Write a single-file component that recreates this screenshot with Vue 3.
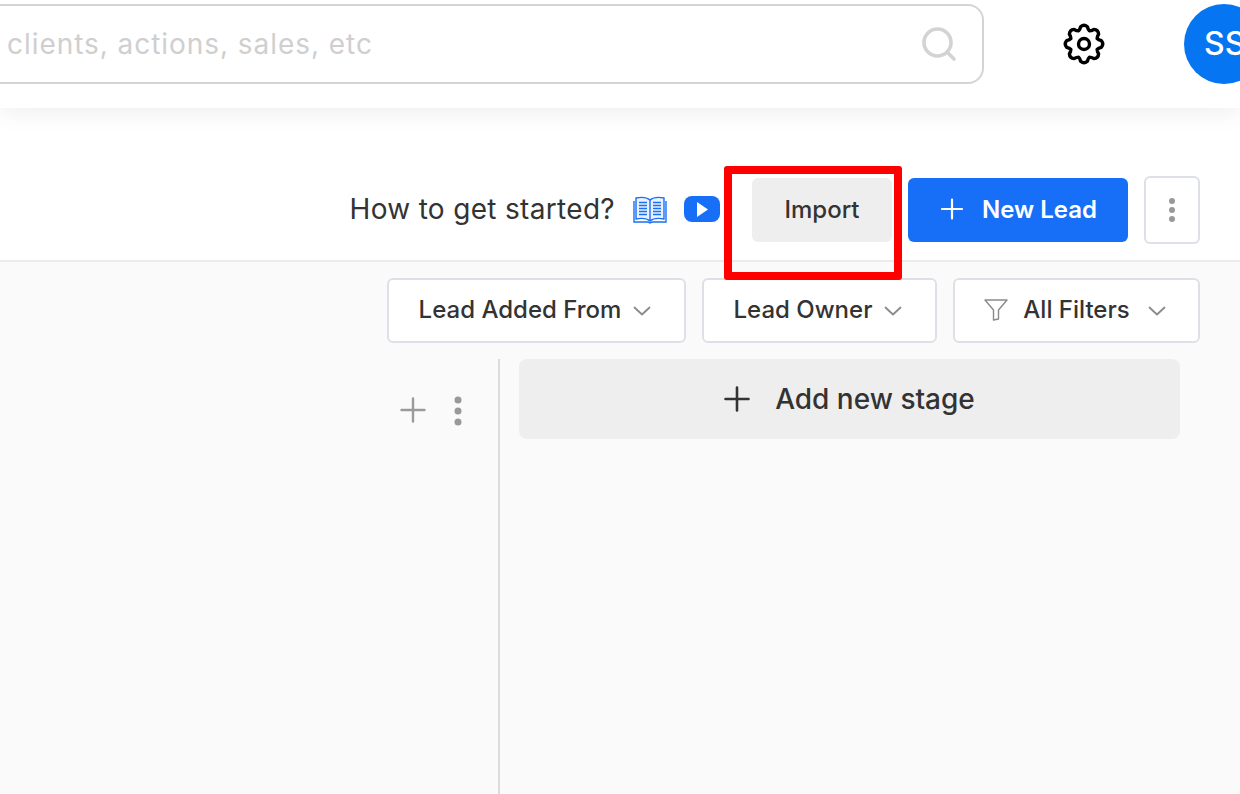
<script setup>
const filters = [
  { label: 'Lead Added From', cls: 'f1' },
  { label: 'Lead Owner', cls: 'f2' },
  { label: 'All Filters', cls: 'f3', funnel: true }
]

const polar = (deg, r) => {
  const a = ((deg - 90) * Math.PI) / 180
  return `${(22 + r * Math.cos(a)).toFixed(2)} ${(22 + r * Math.sin(a)).toFixed(2)}`
}
let gearPath = `M${polar(-22.5, 14.2)}`
for (let i = 0; i < 8; i++) {
  const a = i * 45
  gearPath += `Q${polar(a - 16, 15)} ${polar(a - 11, 17.6)}`
  gearPath += `Q${polar(a, 20.2)} ${polar(a + 11, 17.6)}`
  gearPath += `Q${polar(a + 16, 15)} ${polar(a + 22.5, 14.2)}`
}
gearPath += 'Z'
</script>

<template>
  <div class="page">
    <header class="topbar">
      <div class="search">
        <span class="placeholder">clients, actions, sales, etc</span>
        <svg class="search-icon" width="36" height="36" viewBox="0 0 36 36" fill="none" stroke="#d3d3d3" stroke-width="3.6" stroke-linecap="round">
          <circle cx="16.500" cy="16.500" r="13.500" />
          <path d="M27 27l6 6" />
        </svg>
      </div>
      <svg class="gear" width="44" height="44" viewBox="0 0 44 44" fill="none" stroke="#000" stroke-width="3.400" stroke-linejoin="round">
        <path :d="gearPath" />
        <circle cx="22" cy="22" r="5.500" />
      </svg>
      <div class="avatar">SS</div>
    </header>

    <section class="actions">
      <span class="started">How to get started?</span>
      <svg class="book" width="36" height="28" viewBox="0 0 36 28" fill="none" stroke="#1a6ff5" stroke-width="1.400">
        <path d="M18 4C15 1.500 9 1 4 2v21c5-1 11-.5 14 2 3-2.500 9-3 14-2V2c-5-1-11-.5-14 2z" fill="#e8f1fe" />
        <path d="M2 5v21h14l2 1 2-1h14V5" />
        <path d="M18 4v21" />
        <path d="M7 6.500h8M7 9.500h8M7 12.500h8M7 15.500h8M7 18.500h8M21 6.500h8M21 9.500h8M21 12.500h8M21 15.500h8M21 18.500h8" />
      </svg>
      <span class="play">
        <svg width="11" height="15" viewBox="0 0 11 15"><path d="M0 0l11 7.500L0 15z" fill="#fff" /></svg>
      </span>
      <button class="btn import">Import</button>
      <button class="btn new-lead">
        <svg width="22" height="22" viewBox="0 0 22 22" stroke="#fff" stroke-width="2.200" stroke-linecap="round"><path d="M11 1.500v19M1 11h20" /></svg>
        New Lead
      </button>
      <button class="more">
        <svg width="8" height="26" viewBox="0 0 8 26" fill="#999"><circle cx="4" cy="4" r="3" /><circle cx="4" cy="13" r="3" /><circle cx="4" cy="22" r="3" /></svg>
      </button>
      <div class="highlight"></div>
    </section>

    <main class="board">
      <div class="filters">
        <button v-for="f in filters" :key="f.label" class="filter" :class="f.cls">
          <svg v-if="f.funnel" class="funnel" width="24" height="22" viewBox="0 0 24 22" fill="none" stroke="#8a8a8a" stroke-width="1.400" stroke-linejoin="round">
            <path d="M1 1h22l-8.500 10v9l-5 1V11z" />
          </svg>
          <span>{{ f.label }}</span>
          <svg class="chev" width="18" height="10" viewBox="0 0 18 10" fill="none" stroke="#8a8a8a" stroke-width="1.800" stroke-linecap="round" stroke-linejoin="round">
            <path d="M1.500 1.500L9 8.500l7.500-7" />
          </svg>
        </button>
      </div>
      <div class="lanes">
        <div class="lane-tools">
          <svg class="tool-plus" width="26" height="26" viewBox="0 0 26 26" stroke="#9a9a9a" stroke-width="2.400" stroke-linecap="round"><path d="M13 1.500v23M1.500 13h23" /></svg>
          <svg width="10" height="32" viewBox="0 0 10 32" fill="#999"><circle cx="5" cy="5" r="3.500" /><circle cx="5" cy="16" r="3.500" /><circle cx="5" cy="27" r="3.500" /></svg>
        </div>
        <div class="stage-area">
          <button class="add-stage">
            <svg width="26" height="26" viewBox="0 0 26 26" stroke="#333" stroke-width="2.600" stroke-linecap="round"><path d="M13 1.500v23M1.500 13h23" /></svg>
            Add new stage
          </button>
        </div>
      </div>
    </main>
  </div>
</template>

<style scoped>
.page {
  position: relative;
  width: 1240px;
  height: 794px;
  overflow: hidden;
  background: #fafafa;
  font-family: Inter, "Liberation Sans", sans-serif;
  color: #333;
}
button {
  font-family: inherit;
  cursor: pointer;
}
.topbar {
  position: relative;
  z-index: 2;
  height: 108px;
  box-sizing: border-box;
  padding: 4px 0 0;
  background: #fff;
  display: flex;
  align-items: flex-start;
  box-shadow: 0 4px 24px rgba(0, 0, 0, 0.07);
}
.search {
  flex: none;
  width: 1005px;
  height: 80px;
  margin-left: -21px;
  box-sizing: border-box;
  border: 2px solid #d4d4d4;
  border-radius: 16px;
  display: flex;
  align-items: center;
  justify-content: space-between;
  padding: 0 25px 0 26px;
}
.placeholder {
  font-size: 28px;
  color: #cfcfcf;
  letter-spacing: 0.95px;
}
.search-icon {
  flex: none;
}
.gear {
  flex: none;
  margin: 18px 0 0 78px;
}
.avatar {
  flex: none;
  width: 80px;
  height: 80px;
  margin-left: 78px;
  border-radius: 50%;
  background: #0575f2;
  color: #fff;
  font-size: 32px;
  font-weight: 500;
  line-height: 80px;
  padding-left: 20px;
  box-sizing: border-box;
  white-space: nowrap;
}
.actions {
  position: relative;
  height: 154px;
  box-sizing: border-box;
  padding: 68px 40px 0 0;
  background: #fff;
  border-bottom: 2px solid #ececec;
  display: flex;
  align-items: flex-start;
  justify-content: flex-end;
}
.started {
  font-size: 28px;
  line-height: 66px;
  color: #333;
  letter-spacing: 0.32px;
  white-space: nowrap;
}
.book {
  flex: none;
  margin: 20px 0 0 17px;
}
.play {
  flex: none;
  width: 36px;
  height: 26px;
  margin: 20px 0 0 16px;
  border-radius: 8px;
  background: #166ff6;
  display: flex;
  align-items: center;
  justify-content: center;
}
.btn {
  flex: none;
  height: 64px;
  margin-top: 2px;
  border: 0;
  border-radius: 6px;
  padding-bottom: 2px;
}
.import {
  width: 140px;
  margin-left: 32px;
  background: #eeeeee;
  color: #333;
  font-size: 24px;
  font-weight: 500;
}
.new-lead {
  width: 220px;
  margin-left: 16px;
  background: #166ff6;
  color: #fff;
  font-size: 24px;
  font-weight: 600;
  display: flex;
  align-items: center;
  justify-content: center;
  gap: 19px;
  padding: 0 0 2px 2px;
}
.more {
  flex: none;
  width: 56px;
  height: 68px;
  margin-left: 16px;
  box-sizing: border-box;
  background: #fff;
  border: 2px solid #dde0e6;
  border-radius: 6px;
  display: flex;
  align-items: center;
  justify-content: center;
  padding: 0;
}
.highlight {
  position: absolute;
  left: 724px;
  top: 58px;
  width: 178px;
  height: 114px;
  box-sizing: border-box;
  border: 8px solid #ff0000;
  border-radius: 3px;
  z-index: 3;
}
.filters {
  display: flex;
  justify-content: flex-end;
  gap: 16px;
  padding: 16px 40px 0 0;
}
.filter {
  height: 65px;
  box-sizing: border-box;
  background: #fff;
  border: 2px solid #dde0e6;
  border-radius: 6px;
  color: #333;
  font-size: 24px;
  font-weight: 500;
  display: flex;
  align-items: center;
  justify-content: center;
  padding: 0 3px 2px 0;
  white-space: nowrap;
}
.filter .chev {
  margin-top: 2px;
}
.f1 { width: 299px; gap: 12px; }
.f2 { width: 235px; gap: 12px; }
.f3 { width: 247px; gap: 18px; }
.funnel { margin-right: -3px; }
.lanes {
  display: flex;
  margin-top: 16px;
  height: 440px;
}
.lane-tools {
  flex: none;
  box-sizing: border-box;
  border-right: 2px solid #dcdcdc;
  width: 500px;
  padding: 38px 35px 0 0;
  display: flex;
  justify-content: flex-end;
  align-items: flex-start;
  gap: 27px;
}
.lane-tools svg:last-child {
  margin-top: -2px;
}
.stage-area {
  flex: 1;
  padding: 0 60px 0 19px;
}
.add-stage {
  width: 100%;
  height: 80px;
  border: 0;
  border-radius: 8px;
  background: #eeeeee;
  color: #333;
  font-size: 28px;
  font-weight: 500;
  display: flex;
  align-items: center;
  justify-content: center;
  gap: 25px;
}
</style>
